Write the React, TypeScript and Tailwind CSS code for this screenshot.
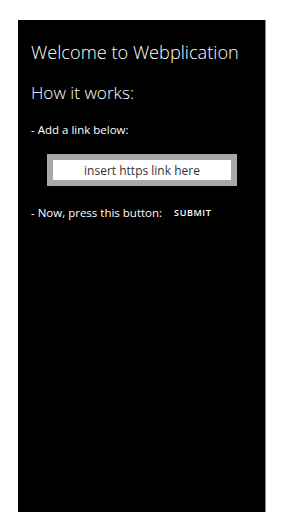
import React from 'react';

export default function App() {
  return (
    <div className="min-h-[512px] w-[282px] bg-white pt-[20px] pl-[18px]" style={{ fontFamily: '"Open Sans", "Noto Sans", sans-serif' }}>
      <div className="h-[492px] w-[248px] bg-black border-r border-[#8a8a8a] pl-[13px] pt-[19px] text-white">
        <h1 className="text-[18.2px] leading-[26px] font-light">Welcome to Webplication</h1>
        <h2 className="mt-[16px] text-[17.2px] leading-[24px] font-light">How it works:</h2>
        <p className="mt-[17px] text-[11.5px] leading-[16px]">- Add a link below:</p>
        <div className="mt-[16px] ml-[16px] w-[190px] border-[6px] border-[#a9a9a9] bg-white">
          <input
            className="block w-full h-[20px] bg-white text-center text-[12px] text-[#333] outline-none placeholder:text-[#333]"
            placeholder="insert https link here"
          />
        </div>
        <div className="mt-[19px] flex items-center text-[11.5px] leading-[16px]">
          <span>- Now, press this button:</span>
          <button className="ml-[12px] text-[9px] font-semibold tracking-[0.6px] uppercase">Submit</button>
        </div>
      </div>
    </div>
  );
}
